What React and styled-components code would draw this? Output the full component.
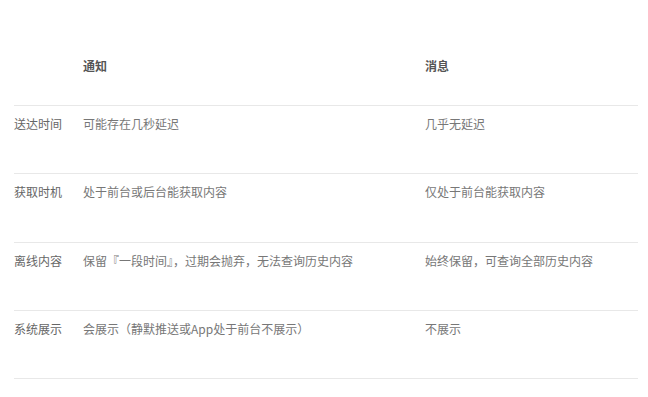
import React from "react";
import styled, { createGlobalStyle } from "styled-components";

const Global = createGlobalStyle`
  html, body { margin: 0; padding: 0; background: #fff; }
  body { font-family: "Noto Sans CJK SC", "Noto Sans", sans-serif; }
`;

const Page = styled.div`
  width: 648px;
  height: 397px;
  padding: 0 10px 0 14px;
  box-sizing: border-box;
  overflow: hidden;
`;

const Table = styled.div`
  display: grid;
  grid-template-columns: 69px 342px 213px;
  width: 624px;
`;

const HeadCell = styled.div`
  box-sizing: border-box;
  height: 106px;
  padding-top: 56px;
  font-size: 12px;
  line-height: 20px;
  font-weight: 700;
  color: #555;
  border-bottom: 1px solid #e8e8e8;
`;

const Cell = styled.div`
  box-sizing: border-box;
  height: 68.25px;
  padding-top: 8px;
  font-size: 12px;
  line-height: 20px;
  color: ${(p) => (p.$label ? "#666" : "#777")};
  border-bottom: 1px solid #e8e8e8;
  white-space: nowrap;
`;

const rows = [
  ["送达时间", "可能存在几秒延迟", "几乎无延迟"],
  ["获取时机", "处于前台或后台能获取内容", "仅处于前台能获取内容"],
  ["离线内容", "保留『一段时间』，过期会抛弃，无法查询历史内容", "始终保留，可查询全部历史内容"],
  ["系统展示", "会展示（静默推送或App处于前台不展示）", "不展示"],
];

export default function App() {
  return (
    <>
      <Global />
      <Page>
        <Table>
          <HeadCell />
          <HeadCell>通知</HeadCell>
          <HeadCell>消息</HeadCell>
          {rows.map(([label, a, b]) => (
            <React.Fragment key={label}>
              <Cell $label>{label}</Cell>
              <Cell>{a}</Cell>
              <Cell>{b}</Cell>
            </React.Fragment>
          ))}
        </Table>
      </Page>
    </>
  );
}
